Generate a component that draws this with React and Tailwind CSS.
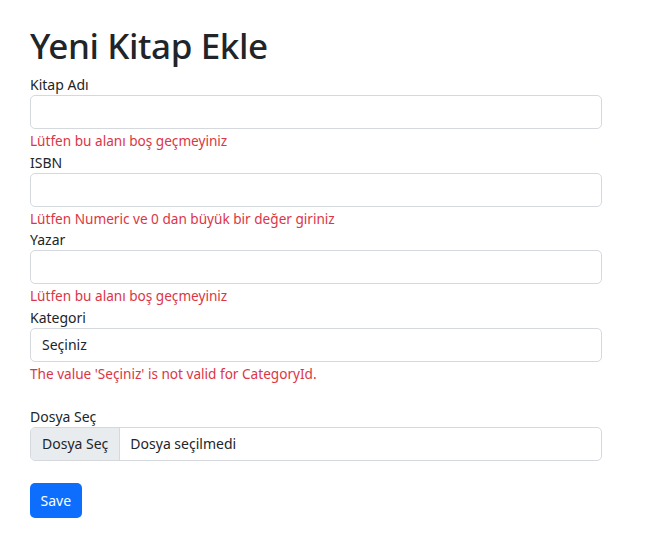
export default function App() {
  const font = { fontFamily: '"Noto Sans", "Segoe UI", sans-serif' };
  const Field = ({ label, error, children }) => (
    <div>
      <label className="block text-[14px] leading-[21px] text-[#212529]">{label}</label>
      {children}
      {error && (
        <div className="mt-[2px] text-[13.6px] leading-[20.5px] text-[#dc3545]">{error}</div>
      )}
    </div>
  );
  const inputCls =
    "block w-full h-[34px] rounded-[5px] border border-[#d5d9dd] bg-white px-[11px] text-[14px] text-[#212529] outline-none";
  return (
    <div className="min-h-screen bg-white pl-[30px] pt-[25px] w-[602px]" style={font}>
      <h1 className="text-[35px] leading-[42px] font-medium tracking-[-0.4px] text-[#212529] mb-[7px]">Yeni Kitap Ekle</h1>
      <form className="flex flex-col">
        <Field label="Kitap Adı" error="Lütfen bu alanı boş geçmeyiniz">
          <input className={inputCls} />
        </Field>
        <Field label="ISBN" error="Lütfen Numeric ve 0 dan büyük bir değer giriniz">
          <input className={inputCls} />
        </Field>
        <Field label="Yazar" error="Lütfen bu alanı boş geçmeyiniz">
          <input className={inputCls} />
        </Field>
        <Field label="Kategori" error="The value 'Seçiniz' is not valid for CategoryId.">
          <div className={inputCls + " flex items-center"}>Seçiniz</div>
        </Field>
        <div className="h-[21.5px]" />
        <Field label="Dosya Seç">
          <div className="flex h-[34px] w-full overflow-hidden rounded-[5px] border border-[#d5d9dd] text-[14px] text-[#212529]">
            <div className="flex items-center bg-[#e9ecef] border-r border-[#d5d9dd] px-[11px]">Dosya Seç</div>
            <div className="flex items-center px-[10px]">Dosya seçilmedi</div>
          </div>
        </Field>
        <div className="mt-[22px]">
          <button
            type="button"
            className="h-[35px] rounded-[5px] bg-[#0d6efd] px-[10.5px] text-[14px] text-white"
          >
            Save
          </button>
        </div>
      </form>
    </div>
  );
}
